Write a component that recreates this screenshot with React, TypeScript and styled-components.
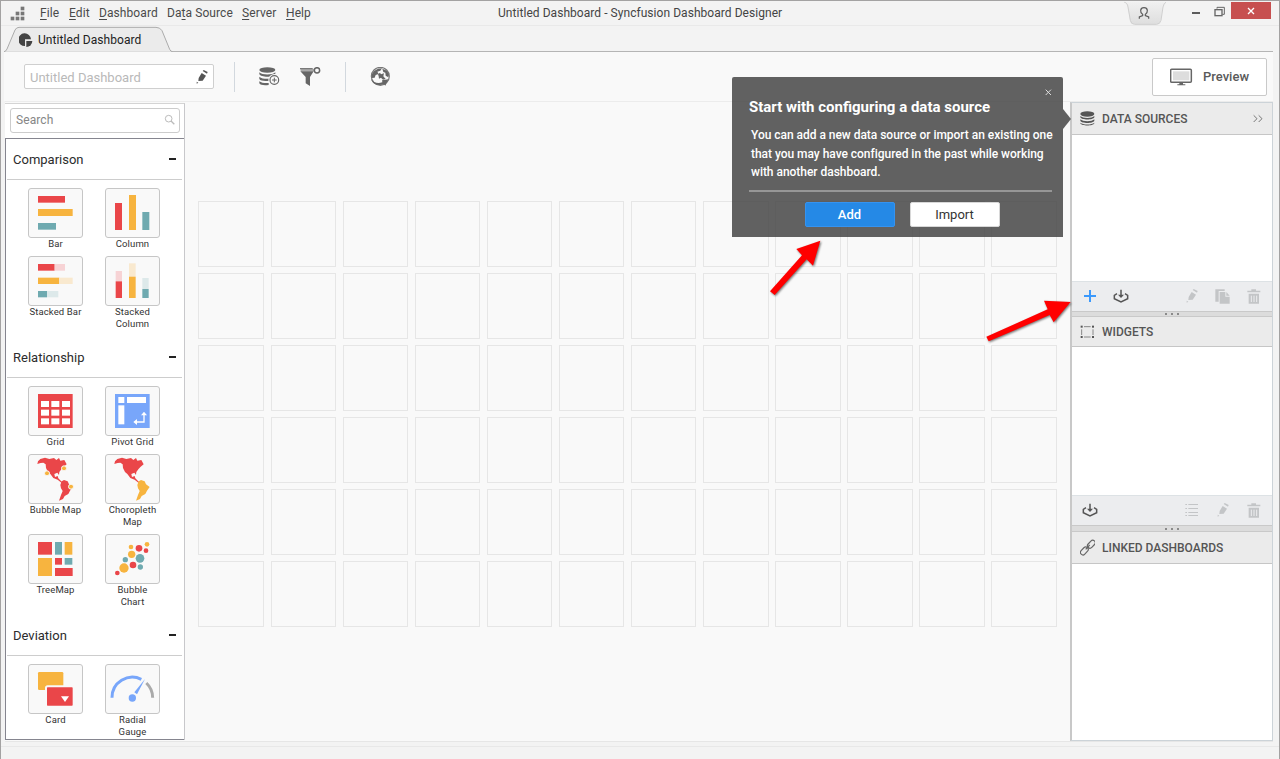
import React from "react";
import styled, { createGlobalStyle } from "styled-components";

const GlobalStyle = createGlobalStyle`
  *, *::before, *::after { box-sizing: border-box; }
  html, body { margin: 0; padding: 0; overflow: hidden; }
  body { font-family: Roboto, "Liberation Sans", sans-serif; font-size: 12px; color: #444; }
  svg { display: block; flex: none; }
`;

const RED = "#ea4649";
const ORANGE = "#f7b43f";
const TEAL = "#6faab0";
const BLUE = "#78a6fa";

/* ---------- window chrome ---------- */

const Window = styled.div`
  width: 1280px;
  height: 759px;
  display: flex;
  flex-direction: column;
  position: relative;
  background: #f3f3f3;
  border: 1px solid #a3a2a2;
  border-bottom: 0;
  overflow: hidden;
`;

const TitleBar = styled.header`
  height: 25px;
  flex: none;
  display: flex;
  align-items: center;
  border-bottom: 1px solid #e9e9e9;
  padding-left: 9px;
`;

const Menu = styled.nav`
  display: flex;
  width: 472px;
  padding-left: 14px;
  gap: 10px;
`;

const MenuItem = styled.span<{ $w: number }>`
  width: ${(p) => p.$w}px;
  font-size: 12px;
  line-height: 24px;
  white-space: nowrap;
  color: #4a4a4a;
  letter-spacing: 0.08px;
  u { text-underline-offset: 2px; text-decoration-skip-ink: none; }
`;

const WindowTitle = styled.h1`
  margin: 0;
  width: 626px;
  font-size: 12px;
  font-weight: 400;
  line-height: 25px;
  color: #444;
  letter-spacing: 0.05px;
`;

const WindowControls = styled.div`
  display: flex;
  align-items: flex-start;
  height: 24px;
`;

const MinimizeIcon = styled.i`
  width: 8px;
  height: 2px;
  margin: 11px 14px 0 26px;
  background: #5c5c5c;
`;

const RestoreButton = styled.span`
  padding-top: 5px;
`;

const CloseButton = styled.button`
  width: 40px;
  height: 17px;
  margin: 1px 0 0 6px;
  padding: 0;
  border: 0;
  display: flex;
  align-items: center;
  justify-content: center;
  background: #c75050;
`;

const TabStrip = styled.div`
  height: 26px;
  flex: none;
  margin: 0 6px 0 3px;
  border-bottom: 1px solid #b5b5b5;
`;

const Tab = styled.div`
  position: relative;
  width: 169px;
  height: 26px;
  display: flex;
  align-items: center;
  padding: 2px 0 0 15px;
  font-size: 12px;
  color: #222;
  letter-spacing: 0.06px;
`;

const TabShape = styled.div`
  position: absolute;
  left: 0;
  top: 0;
  z-index: 0;
`;

const TabContent = styled.div`
  position: relative;
  display: flex;
  align-items: center;
  gap: 5px;
`;

/* ---------- toolbar ---------- */

const Toolbar = styled.div`
  height: 49px;
  flex: none;
  display: flex;
  align-items: center;
  margin: 0 6px 0 3px;
  padding-left: 20px;
  background: #f9f9f9;
`;

const NameField = styled.div`
  width: 190px;
  height: 25px;
  display: flex;
  align-items: center;
  justify-content: space-between;
  padding: 1px 5px 0 5px;
  background: #fff;
  border: 1px solid #cfcfcf;
  border-radius: 2px;
  font-size: 13px;
  color: #b9b9b9;
`;

const ToolGroup = styled.div`
  display: flex;
  align-items: center;
  gap: 19px;
  margin-right: 4px;
`;

const Divider = styled.i`
  width: 1px;
  height: 30px;
  margin: 0 24px 0 20px;
  background: #d2d8de;
`;

const PreviewButton = styled.button`
  width: 115px;
  height: 38px;
  margin: 0 6px 0 auto;
  padding: 0 0 0 17px;
  display: flex;
  align-items: center;
  gap: 10px;
  background: #fff;
  border: 1px solid #c9c9c9;
  border-radius: 2px;
  font: 500 13px Roboto, sans-serif;
  color: #5a5a5a;
`;

/* ---------- workspace ---------- */

const Workspace = styled.div`
  height: 641px;
  flex: none;
  display: flex;
  margin: 0 6px 0 4px;
  border-top: 1px solid #ececec;
  border-bottom: 1px solid #e6e6e6;
  background: #f9f9f9;
`;

const Palette = styled.aside`
  width: 180px;
  height: 637px;
  margin-top: 1px;
  display: flex;
  flex-direction: column;
  background: #fff;
  border-right: 1px solid #c8c8cb;
  border-top: 1px solid #d4d4d4;
`;

const SearchField = styled.div`
  height: 25px;
  flex: none;
  margin: 4px 4px 5px 5px;
  padding: 0 3px 1px 5px;
  display: flex;
  align-items: center;
  justify-content: space-between;
  border: 1px solid #ccc;
  border-radius: 3px;
  color: #868686;
  letter-spacing: 0.1px;
`;

const Categories = styled.div`
  flex: 1;
  border: 1px solid #85858f;
  border-right: 0;
  overflow: hidden;
`;

const Category = styled.section`
  &:first-child { margin-top: -1px; }
`;

const CategoryHead = styled.h2`
  height: 42px;
  margin: 0 2px 0 1px;
  padding: 1px 6px 0 6px;
  display: flex;
  align-items: center;
  justify-content: space-between;
  border-bottom: 1px solid #cdcdcd;
  font-size: 13px;
  font-weight: 400;
  color: #2c2c2c;
`;

const Collapse = styled.i`
  width: 7px;
  height: 2px;
  background: #222;
`;

const Tiles = styled.div`
  display: grid;
  grid-template-columns: 77px 77px;
  padding: 8px 0 0 11px;
`;

const Tile = styled.figure`
  margin: 0;
  padding-bottom: 6px;
  display: flex;
  flex-direction: column;
  align-items: center;
`;

const TileBox = styled.div`
  width: 55px;
  height: 50px;
  overflow: hidden;
  background: #f9f9f9;
  border: 1px solid #c6c6c6;
  border-radius: 3px;
  svg { margin: -1px; }
`;

const TileLabel = styled.figcaption`
  width: 55px;
  text-align: center;
  font-size: 9.5px;
  line-height: 12px;
  color: #333;
  letter-spacing: 0.12px;
`;

const Canvas = styled.main`
  width: 885px;
  padding: 99px 0 0 13.45px;
`;

const CellGrid = styled.div`
  width: 858.35px;
  display: grid;
  grid-template-columns: repeat(12, 65.65px);
  grid-auto-rows: 66px;
  justify-content: space-between;
  row-gap: 6px;
`;

const Cell = styled.div`
  border: 1px solid #e6e6e6;
`;

/* ---------- side panels ---------- */

const SidePanel = styled.aside`
  width: 203px;
  height: 639px;
  display: flex;
  flex-direction: column;
  background: #fff;
  border: solid #ccd3d8;
  border-width: 1px 1px 1px 2px;
  border-left-color: #c8c8c8;
`;

const PanelHead = styled.h2<{ $h: number }>`
  height: ${(p) => p.$h}px;
  flex: none;
  margin: 0;
  padding: 0 8px 0 8px;
  display: flex;
  align-items: center;
  gap: 7px;
  background: #ebebeb;
  border-bottom: 1px solid #c6c6c6;
  font-size: 12px;
  font-weight: 500;
  line-height: 14px;
  color: #555;
  > svg:last-child:not(:first-child) { margin-left: auto; }
`;

const PanelBody = styled.div<{ $h?: number }>`
  ${(p) => (p.$h ? `height: ${p.$h}px; flex: none;` : "flex: 1;")}
`;

const PanelTools = styled.div`
  height: 30px;
  flex: none;
  display: flex;
  align-items: center;
  padding: 0 3px 0 2px;
  background: #ecedef;
  border-top: 1px solid #dde2e5;
`;

const ToolSlot = styled.span<{ $push?: boolean }>`
  width: 31px;
  height: 29px;
  display: flex;
  justify-content: center;
  padding: 7px 0 0 1px;
  margin-left: ${(p) => (p.$push ? "auto" : "0")};
`;

const Splitter = styled.div<{ $h: number }>`
  height: ${(p) => p.$h}px;
  flex: none;
  display: flex;
  align-items: center;
  justify-content: center;
  gap: 4px;
  background: #dcdcdc;
  border: solid #c9c9c9;
  border-width: 1px 0;
  i { width: 2px; height: 2px; background: #8a8a8a; }
`;

const StatusBar = styled.footer`
  flex: 1;
  margin-top: 4px;
  border-top: 1px solid #e8e8e8;
`;

/* ---------- floating hint ---------- */

const Hint = styled.div`
  position: absolute;
  left: 731px;
  top: 76px;
  width: 331px;
  height: 160px;
  padding: 0 11px 0 17px;
  background: rgba(75, 75, 75, 0.88);
  border-radius: 2px 2px 0 0;
  color: #fff;
`;

const HintPointer = styled.i`
  position: absolute;
  left: 331px;
  top: 32px;
  border: solid transparent;
  border-width: 10px 0 10px 8px;
  border-left-color: rgba(75, 75, 75, 0.88);
`;

const HintClose = styled.div`
  position: absolute;
  right: 11px;
  top: 12px;
`;

const HintTitle = styled.h3`
  margin: 0;
  padding-top: 20px;
  font-size: 15px;
  font-weight: 700;
  line-height: 20px;
  white-space: nowrap;
`;

const HintText = styled.p`
  margin: 9px 0 0 2px;
  font-size: 12px;
  font-weight: 500;
  line-height: 18.5px;
  letter-spacing: -0.03px;
  white-space: nowrap;
`;

const HintActions = styled.div`
  margin-top: 8px;
  padding: 10px 0 0 3px;
  display: flex;
  justify-content: center;
  gap: 15px;
  border-top: 2px solid #969696;
`;

const HintButton = styled.button<{ $primary?: boolean }>`
  width: 90px;
  height: 25px;
  padding: 0;
  border: 1px solid ${(p) => (p.$primary ? "#3593f0" : "#d8d8d8")};
  border-radius: 2px;
  background: ${(p) => (p.$primary ? "#2589e6" : "#fff")};
  color: ${(p) => (p.$primary ? "#fff" : "#333")};
  font-family: Roboto, "Liberation Sans", sans-serif;
  font-size: 13px;
  font-weight: ${(p) => (p.$primary ? 500 : 400)};
`;

const Callouts = styled.svg`
  position: absolute;
  left: 718px;
  top: 69px;
  pointer-events: none;
  filter: drop-shadow(1px 1px 1px rgba(0, 0, 0, 0.55));
`;

/* ---------- icons ---------- */

type ArtProps = { w: number; h: number; box?: string; children: React.ReactNode };
const Art = ({ w, h, box, children }: ArtProps) => (
  <svg width={w} height={h} viewBox={box ?? `0 0 ${w * 3} ${h * 3}`} fill="none">
    {children}
  </svg>
);

const R = ({ d, c }: { d: number[]; c: string }) => (
  <rect x={d[0]} y={d[1]} width={d[2]} height={d[3]} fill={c} />
);

const LogoIcon = () => (
  <Art w={16} h={15}>
    {[[0, 30], [15, 30], [30, 30], [15, 15], [30, 15], [30, 0]].map(([x, y]) => (
      <R key={`${x}-${y}`} d={[x + 2, y + 2, 11, 11]} c="#777" />
    ))}
  </Art>
);

const PencilIcon = ({ c = "#555" }: { c?: string }) => (
  <Art w={12} h={14}>
    <path d="M20 3l3-3 12 6-2 5z" fill={c} />
    <path d="M17 9l13 8-10 15-13 1 1-9z" fill={c} />
    <path d="M2 35l5 3-5 3z" fill={c} />
  </Art>
);

const DatabaseIcon = () => (
  <Art w={15} h={15}>
    <g fill="#555">
      <ellipse cx="22" cy="9" rx="21" ry="8" />
      <path d="M1 15c7 8 35 8 42 0v4c-3 9-39 9-42 0z" />
      <path d="M1 25c7 8 35 8 42 0v4c-3 9-39 9-42 0z" />
      <path d="M1 35c7 7 35 7 42 0v2c-3 9-39 9-42 0z" />
    </g>
  </Art>
);

const AddDatabaseIcon = () => (
  <Art w={22} h={20}>
    <g fill="#666">
      <ellipse cx="25" cy="9" rx="24" ry="8" />
      <path d="M1 16c8 9 40 9 48 0v5c-4 11-44 11-48 0z" />
      <path d="M1 29c6 6 20 7 30 6v6c-12 2-27 1-30-5z" />
      <path d="M1 43c6 5 18 6 28 5v6c-12 2-25 1-28-5z" />
    </g>
    <circle cx="46" cy="39" r="18" fill="#f9f9f9" />
    <circle cx="46" cy="39" r="13" stroke="#666" strokeWidth="3.5" />
    <path d="M46 32v14M39 39h14" stroke="#666" strokeWidth="3" />
  </Art>
);

const FilterIcon = () => (
  <Art w={21} h={20}>
    <path d="M1 5h42l-1 8H2z" fill="#aaa" />
    <path d="M1 13h40L30 30v27l-13-8V30z" fill="#666" />
    <path d="M0 5h38" stroke="#666" strokeWidth="3" />
    <circle cx="51" cy="10" r="8" fill="#f9f9f9" stroke="#666" strokeWidth="4.5" />
  </Art>
);

const GlobeIcon = () => (
  <Art w={21} h={20}>
    <circle cx="31" cy="28" r="27" stroke="#777" strokeWidth="3.5" />
    <path d="M12 12l12-7 12-1-5 7-9 3 4 7-9 3-3 8-9 1 1-12z" fill="#666" />
    <path d="M37 5l14 6 6 12-2 8-8-5-1-9-6-2z" fill="#666" />
    <path d="M24 22l6-5 3 5 9-3-2 9 7 8-8 2-6-6-6 3-1-7z" fill="#666" />
    <path d="M3 35c7 12 20 15 34 11l-1-6 19-3-9 19-4-4c-18 6-35 0-39-17z" fill="#666" />
  </Art>
);

const MonitorIcon = () => (
  <Art w={23} h={18}>
    <rect x="2" y="4" width="62" height="39" rx="3" fill="#fff" stroke="#666" strokeWidth="4.5" />
    <R d={[9, 10, 49, 27]} c="#ddd" />
    <path d="M28 44h11v5h7v3H22v-3h6z" fill="#666" />
  </Art>
);

const UserTab = () => (
  <Art w={42} h={24}>
    <defs>
      <linearGradient id="userTab" x1="0" y1="0" x2="0" y2="1">
        <stop offset="0" stopColor="#f0f0f0" />
        <stop offset="1" stopColor="#dedede" />
      </linearGradient>
    </defs>
    <path d="M0 4q9 1 11 14l7 40q2 12 13 12h66q10 0 13-12l6-40q3-13 10-14z" fill="url(#userTab)" />
    <path d="M1 4q9 1 11 14l7 40q2 12 13 12h66q10 0 13-12l6-40q3-13 9-14" stroke="#cfcfcf" strokeWidth="3" />
    <path d="M46 53v-5l10-4v-4q-7-6-6-12 1-8 10-8t10 8q1 6-6 12v4l10 4v5" stroke="#5c5c5c" strokeWidth="3.6" />
  </Art>
);

const RestoreIcon = () => (
  <Art w={11} h={12}>
    <path d="M9 8V4h22v21h-6" stroke="#666" strokeWidth="3" />
    <rect x="3" y="11" width="21" height="18" stroke="#666" strokeWidth="4" />
  </Art>
);

const PieIcon = () => (
  <Art w={14} h={14}>
    <path d="M18 39A19 19 0 1 1 36 19H18z" fill="#444" />
    <path d="M22 24h18A18 18 0 0 1 22 42z" fill="#444" />
  </Art>
);

const ImportIcon = () => (
  <Art w={16} h={15}>
    <path d="M12 14L4 19v10l20 10 20-10V19l-8-5" stroke="#555" strokeWidth="4.5" />
    <path d="M24 2v18" stroke="#555" strokeWidth="4.5" />
    <path d="M15 17h18l-9 10z" fill="#555" />
  </Art>
);

const CopyIcon = () => (
  <Art w={16} h={15}>
    <path d="M1 1h28v5H11v32H1z" fill="#c3c5c7" />
    <path d="M14 9h17v14h13v21H14z" fill="#c3c5c7" />
    <path d="M34 9l10 11H34z" fill="#c3c5c7" />
  </Art>
);

const TrashIcon = () => (
  <Art w={14} h={16}>
    <path d="M1 5h12V1h14v4h13v5H1zM5 14h31v30H5z" fill="#c3c5c7" />
    <path d="M13 20v19M21 20v19M29 20v19" stroke="#ecedef" strokeWidth="3" />
  </Art>
);

const ListIcon = () => (
  <Art w={14} h={14}>
    {[4.5, 16.5, 28.5, 37.5].map((y) => (
      <path key={y} d={`M1 ${y}h5M10 ${y}h29`} stroke="#c3c5c7" strokeWidth="3" />
    ))}
  </Art>
);

const WidgetsIcon = () => (
  <Art w={15} h={14}>
    <path d="M12 5h20M12 36h20M5 13v17M39 13v17" stroke="#888" strokeWidth="3" />
    {[[2, 2], [36, 2], [2, 33], [36, 33]].map(([x, y]) => (
      <R key={`${x}-${y}`} d={[x, y, 6, 6]} c="#555" />
    ))}
  </Art>
);

const LinkIcon = () => (
  <Art w={15} h={17} box="2 0 45 51">
    <g stroke="#666" strokeWidth="3.5">
      <rect x="22" y="8" width="27" height="15" rx="7.5" transform="rotate(-47 36 15)" />
      <rect x="1" y="28" width="27" height="15" rx="7.5" transform="rotate(-47 15 35)" />
      <path d="M19 31l12-13" />
    </g>
  </Art>
);

const NORTH = "M28 30l2-8 7-7 14-4 13 4 14-3 7 6 8-6 4 8 12-2 7 13-9 7-7 8-6 8-1 9-5-7-9 4 2 9 8-3 2 7 8 8 6 5-3 2-13-11-13-5-9-12-7-6-6-12-1-11-7-5-8 1z";
const SOUTH = "M97 93l4-11 7-4 11 4 4 9 11 8-8 11-5 10-11 6-5 9-12 5 6-17 5-12-5-8z";

const tileArt: Record<string, React.ReactNode> = {
  Bar: <><R d={[30, 24, 81, 20]} c={RED} /><R d={[30, 63, 104, 21]} c={ORANGE} /><R d={[30, 105, 54, 20]} c={TEAL} /></>,
  Column: <><R d={[30, 45, 21, 81]} c={RED} /><R d={[72, 21, 21, 105]} c={ORANGE} /><R d={[112, 72, 21, 54]} c={TEAL} /></>,
  "Stacked Bar": (
    <>
      <R d={[30, 24, 50, 20]} c={RED} /><R d={[80, 24, 31, 20]} c="#f7d3d5" />
      <R d={[30, 65, 64, 19]} c={ORANGE} /><R d={[94, 65, 40, 19]} c="#f9e9cf" />
      <R d={[30, 105, 27, 19]} c={TEAL} /><R d={[57, 105, 34, 19]} c="#dde9ea" />
    </>
  ),
  "Stacked Column": (
    <>
      <R d={[32, 45, 19, 31]} c="#f7d3d5" /><R d={[32, 76, 19, 50]} c={RED} />
      <R d={[72, 22, 20, 40]} c="#f9e9cf" /><R d={[72, 62, 20, 64]} c={ORANGE} />
      <R d={[112, 66, 19, 33]} c="#dde9ea" /><R d={[112, 99, 19, 27]} c={TEAL} />
    </>
  ),
  Grid: (
    <>
      <R d={[30, 24, 104, 102]} c={RED} />
      {[45, 71, 97].flatMap((y) => [39, 70, 102].map((x) => <R key={`${x}-${y}`} d={[x, y, 24, 18]} c="#fff" />))}
    </>
  ),
  "Pivot Grid": (
    <>
      <R d={[30, 24, 104, 102]} c={BLUE} />
      <R d={[40, 33, 18, 18]} c="#fff" /><R d={[66, 33, 57, 18]} c="#fff" /><R d={[40, 58, 18, 57]} c="#fff" />
      <path d="M93 108h24V85" stroke="#fff" strokeWidth="4" />
      <path d="M96 99l-11 9 11 9zM108 88l9-11 9 11z" fill="#fff" />
    </>
  ),
  "Bubble Map": (
    <>
      <path d={NORTH} fill={RED} /><path d={SOUTH} fill={RED} />
      {[[57, 58], [108, 43], [129, 98]].map(([x, y]) => (
        <circle key={x} cx={x} cy={y} r="7.5" fill={ORANGE} stroke="#f9f9f9" strokeWidth="3" />
      ))}
    </>
  ),
  "Choropleth Map": <><path d={NORTH} fill={RED} /><path d={SOUTH} fill={ORANGE} /></>,
  TreeMap: (
    <>
      <R d={[30, 24, 42, 38]} c={RED} /><R d={[81, 24, 21, 38]} c={TEAL} /><R d={[110, 24, 23, 38]} c={ORANGE} />
      <R d={[30, 72, 42, 54]} c={ORANGE} /><R d={[81, 72, 21, 20]} c={RED} /><R d={[110, 72, 23, 20]} c={TEAL} />
      <R d={[81, 102, 53, 24]} c={RED} />
    </>
  ),
  "Bubble Chart": (
    <>
      {([
        [126, 31, 7, ORANGE], [78, 39, 7, ORANGE], [102, 43, 10, RED], [123, 50, 7, RED], [80, 61, 11, ORANGE], [61, 77, 8, TEAL],
        [105, 73, 13, TEAL], [84, 93, 10, RED], [106, 99, 8, TEAL], [57, 102, 14, ORANGE], [37, 117, 7, RED],
      ] as [number, number, number, string][]).map(([x, y, r, c]) => <circle key={x} cx={x} cy={y} r={r} fill={c} />)}
    </>
  ),
  Card: (
    <>
      <rect x="30" y="24" width="76" height="54" rx="4" fill={ORANGE} />
      <rect x="54" y="67" width="83" height="61" rx="5" fill={RED} stroke="#f9f9f9" strokeWidth="6" />
      <path d="M99 97h24l-12 17z" fill="#fff" />
    </>
  ),
  "Radial Gauge": (
    <>
      <path d="M21 101A61 61 0 0 1 109 46" stroke={BLUE} strokeWidth="9" />
      <path d="M124 57A61 61 0 0 1 143 101" stroke="#aaa" strokeWidth="9" />
      <path d="M120 45L96 91l-8-6z" fill={BLUE} />
      <circle cx="82" cy="102" r="11" fill={BLUE} />
    </>
  ),
};

const categories = [
  { name: "Comparison", tiles: ["Bar", "Column", "Stacked Bar", "Stacked Column"] },
  { name: "Relationship", tiles: ["Grid", "Pivot Grid", "Bubble Map", "Choropleth Map", "TreeMap", "Bubble Chart"] },
  { name: "Deviation", tiles: ["Card", "Radial Gauge"] },
];

const menus = [
  { pre: "", key: "F", post: "ile", w: 19 },
  { pre: "", key: "E", post: "dit", w: 20 },
  { pre: "", key: "D", post: "ashboard", w: 58 },
  { pre: "Da", key: "t", post: "a Source", w: 65 },
  { pre: "", key: "S", post: "erver", w: 34 },
  { pre: "", key: "H", post: "elp", w: 25 },
];

export default function App() {
  return (
    <>
      <GlobalStyle />
      <Window>
        <TitleBar>
          <LogoIcon />
          <Menu>
            {menus.map((m) => (
              <MenuItem key={m.key} $w={m.w}>{m.pre}<u>{m.key}</u>{m.post}</MenuItem>
            ))}
          </Menu>
          <WindowTitle>Untitled Dashboard - Syncfusion Dashboard Designer</WindowTitle>
          <WindowControls>
            <UserTab />
            <MinimizeIcon />
            <RestoreButton><RestoreIcon /></RestoreButton>
            <CloseButton aria-label="Close">
              <Art w={8} h={8}><path d="M3 3l18 18M21 3L3 21" stroke="#fff" strokeWidth="4" /></Art>
            </CloseButton>
          </WindowControls>
        </TitleBar>
        <TabStrip>
          <Tab>
            <TabShape>
              <Art w={169} h={26}>
                <path
                  d="M0 77q6-1 9-8L33 12Q37 4 45 4H456Q468 4 474 14L497 70Q500 77 506 77"
                  fill="#ebebeb" stroke="#ababab" strokeWidth="3"
                />
              </Art>
            </TabShape>
            <TabContent><PieIcon />Untitled Dashboard</TabContent>
          </Tab>
        </TabStrip>
        <Toolbar>
          <NameField>Untitled Dashboard<PencilIcon /></NameField>
          <Divider />
          <ToolGroup><AddDatabaseIcon /><FilterIcon /></ToolGroup>
          <Divider />
          <GlobeIcon />
          <PreviewButton><MonitorIcon />Preview</PreviewButton>
        </Toolbar>
        <Workspace>
          <Palette>
            <SearchField>
              Search
              <Art w={12} h={12}>
                <circle cx="14" cy="14" r="10" stroke="#bbb" strokeWidth="3" />
                <path d="M21 21l10 10" stroke="#bbb" strokeWidth="4" />
              </Art>
            </SearchField>
            <Categories>
              {categories.map((c) => (
                <Category key={c.name}>
                  <CategoryHead>{c.name}<Collapse /></CategoryHead>
                  <Tiles>
                    {c.tiles.map((t) => (
                      <Tile key={t}>
                        <TileBox><Art w={55} h={50}>{tileArt[t]}</Art></TileBox>
                        <TileLabel>{t}</TileLabel>
                      </Tile>
                    ))}
                  </Tiles>
                </Category>
              ))}
            </Categories>
          </Palette>
          <Canvas>
            <CellGrid>{Array.from({ length: 72 }, (_, i) => <Cell key={i} />)}</CellGrid>
          </Canvas>
          <SidePanel>
            <PanelHead $h={32}>
              <DatabaseIcon />DATA SOURCES
              <Art w={11} h={10}><path d="M2 4l10 10L2 24M17 4l10 10-10 10" stroke="#777" strokeWidth="3" /></Art>
            </PanelHead>
            <PanelBody $h={146} />
            <PanelTools>
              <ToolSlot><Art w={14} h={14}><path d="M21 3v36M3 21h36" stroke="#3b99fc" strokeWidth="6" /></Art></ToolSlot>
              <ToolSlot><ImportIcon /></ToolSlot>
              <ToolSlot $push><PencilIcon c="#c3c5c7" /></ToolSlot>
              <ToolSlot><CopyIcon /></ToolSlot>
              <ToolSlot><TrashIcon /></ToolSlot>
            </PanelTools>
            <Splitter $h={6}><i /><i /><i /></Splitter>
            <PanelHead $h={30}><WidgetsIcon />WIDGETS</PanelHead>
            <PanelBody $h={148} />
            <PanelTools>
              <ToolSlot><ImportIcon /></ToolSlot>
              <ToolSlot $push><ListIcon /></ToolSlot>
              <ToolSlot><PencilIcon c="#c3c5c7" /></ToolSlot>
              <ToolSlot><TrashIcon /></ToolSlot>
            </PanelTools>
            <Splitter $h={7}><i /><i /><i /></Splitter>
            <PanelHead $h={32}><LinkIcon />LINKED DASHBOARDS</PanelHead>
            <PanelBody />
          </SidePanel>
        </Workspace>
        <StatusBar />
        <Hint>
          <HintPointer />
          <HintClose><Art w={7} h={7}><path d="M2 2l16 16M18 2L2 18" stroke="#ddd" strokeWidth="3" /></Art></HintClose>
          <HintTitle>Start with configuring a data source</HintTitle>
          <HintText>
            You can add a new data source or import an existing one<br />
            that you may have configured in the past while working<br />
            with another dashboard.
          </HintText>
          <HintActions>
            <HintButton $primary>Add</HintButton>
            <HintButton>Import</HintButton>
          </HintActions>
        </Hint>
        <Callouts width="356" height="280" viewBox="0 0 1068 840">
          <path d="M153 664L249 556l-17-19 72-25-22 75-19-19-96 107z" fill="#f00" />
          <path d="M802 800L986 718l-11-26 80 4-51 61-12-22-183 79z" fill="#f00" />
        </Callouts>
      </Window>
    </>
  );
}
